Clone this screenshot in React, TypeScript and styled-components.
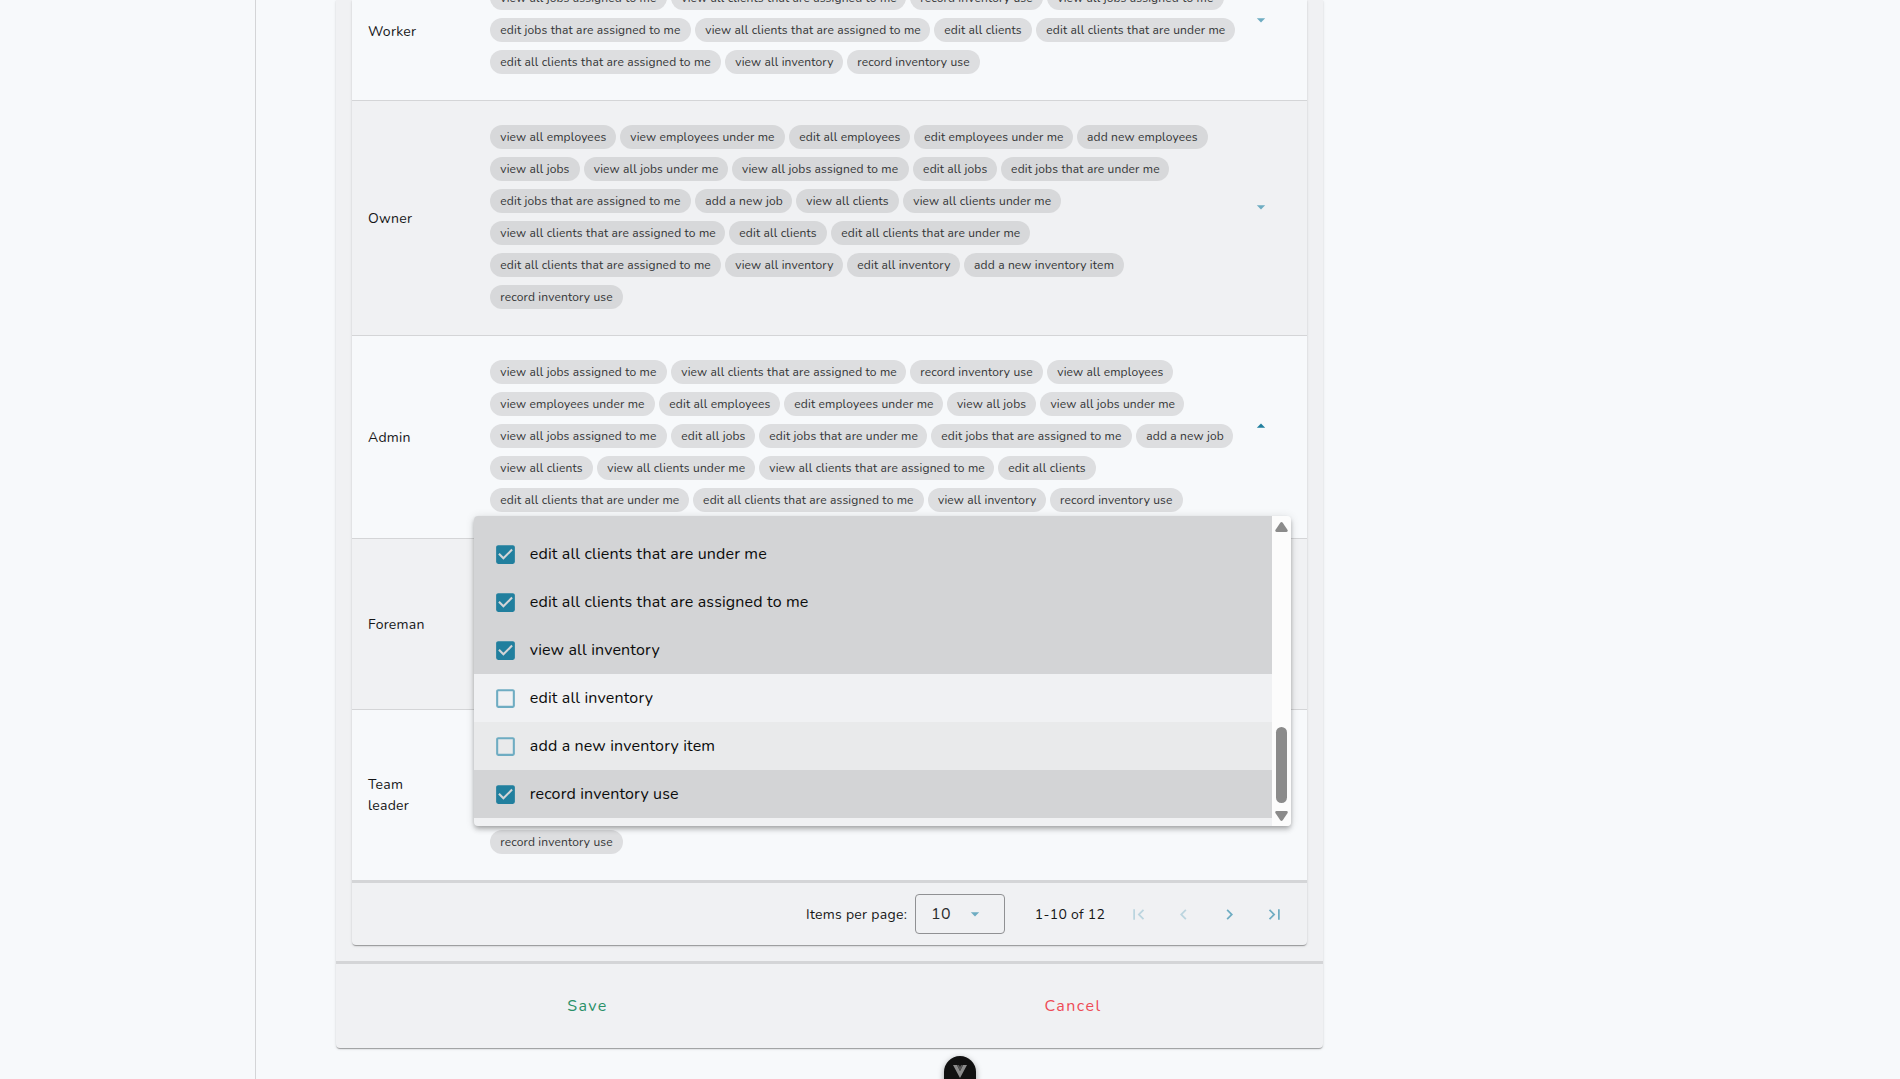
import React from "react";
import styled, { createGlobalStyle, css } from "styled-components";

const colors = {
  page: "#f7f9fb",
  surface: "#f0f1f3",
  line: "#d4d5d7",
  accent: "#6eacc2",
  primary: "#217f9e",
  text: "#151617",
};

const GlobalStyle = createGlobalStyle`
  * { box-sizing: border-box; }
  html, body { margin: 0; height: 1079px; overflow: hidden; background: ${colors.page}; }
  body { font-family: Nunito, Lato, "Noto Sans", sans-serif; color: ${colors.text}; }
  button { font: inherit; border: 0; background: none; padding: 0; }
`;

const Page = styled.div`
  display: flex;
  position: relative;
  height: 1079px;
  overflow: hidden;
`;
const Sidebar = styled.aside`
  width: 256px;
  border-right: 1px solid ${colors.line};
`;
const Main = styled.main`
  padding-left: 80px;
`;
const elevation = css`
  box-shadow: 0 2px 1px -1px rgba(0, 0, 0, 0.2), 0 1px 1px 0 rgba(0, 0, 0, 0.14),
    0 1px 3px 0 rgba(0, 0, 0, 0.12);
`;
const Card = styled.section`
  width: 987px;
  height: 1048px;
  display: flex;
  flex-direction: column;
  background: ${colors.surface};
  border-radius: 0 0 4px 4px;
  ${elevation}
`;
const TableCard = styled.div`
  margin: 0 16px 16px;
  height: 945px;
  flex: none;
  display: flex;
  flex-direction: column;
  justify-content: flex-end;
  border-radius: 0 0 4px 4px;
  ${elevation}
`;
const Row = styled.div<{ $striped?: boolean; $last?: boolean }>`
  flex: none;
  display: grid;
  grid-template-columns: 122px 751px 1fr;
  align-items: center;
  padding: 0 0 0 16px;
  background: ${(p) => (p.$striped ? colors.surface : colors.page)};
  border-bottom: ${(p) => (p.$last ? 3 : 1)}px solid ${colors.line};
`;
const RoleName = styled.div`
  width: 66px;
  font-size: 14px;
  line-height: 21px;
  letter-spacing: 0.25px;
`;
const Chips = styled.div<{ $lines: number }>`
  display: flex;
  flex-wrap: wrap;
  align-content: flex-start;
  gap: 8px 4px;
  padding-top: 24px;
  height: ${(p) => p.$lines * 32 + 42}px;
`;
const Chip = styled.span<{ $width: number; $striped?: boolean }>`
  width: ${(p) => p.$width}px;
  height: 24px;
  border-radius: 12px;
  padding-left: 10.3px;
  display: flex;
  align-items: center;
  white-space: nowrap;
  font-size: 12px;
  letter-spacing: 0.15px;
  color: #333435;
  background: ${(p) => (p.$striped ? "#d7d8da" : "#dddee0")};
`;
const Caret = styled.button<{ $open?: boolean }>`
  display: flex;
  width: 20px;
  height: 20px;
  margin: 0 0 23px 10px;
  color: ${(p) => (p.$open ? colors.primary : colors.accent)};
  transform: ${(p) => (p.$open ? "rotate(180deg)" : "none")};
`;

const Pager = styled.div`
  flex: none;
  height: 62px;
  display: flex;
  align-items: center;
  justify-content: flex-end;
  padding-right: 22.1px;
  font-size: 14px;
  letter-spacing: 0.28px;
`;
const PerPage = styled.span`
  width: 109px;
`;
const Select = styled.div`
  width: 90px;
  height: 40px;
  display: flex;
  align-items: center;
  justify-content: space-between;
  padding: 0 19px 0 15px;
  border: 1px solid #909193;
  border-radius: 4px;
  font-size: 16px;
  color: #2b2c2d;
`;
const SelectCaret = styled.span`
  display: flex;
  color: ${colors.accent};
`;
const Range = styled.span`
  width: 92.9px;
  margin-left: 29.8px;
`;
const PageButton = styled.button<{ $disabled?: boolean }>`
  display: flex;
  margin-left: 24.4px;
  color: ${colors.accent};
  opacity: ${(p) => (p.$disabled ? 0.4 : 1)};
  &:first-of-type { margin-left: 0; }
`;

const Actions = styled.footer`
  flex: 1;
  display: grid;
  grid-template-columns: 503px 1fr;
  border-top: 3px solid ${colors.line};
  padding-bottom: 1px;
`;
const Action = styled.button<{ $tone: string; $shift?: number }>`
  color: ${(p) => p.$tone};
  font-size: 16px;
  letter-spacing: 1.43px;
  padding-right: ${(p) => p.$shift ?? 0}px;
`;

const Menu = styled.div`
  position: absolute;
  left: 474px;
  top: 516px;
  width: 817px;
  height: 310px;
  display: flex;
  overflow: hidden;
  border-radius: 4px;
  background: ${colors.surface};
  box-shadow: 0 2px 4px -1px rgba(0, 0, 0, 0.2), 0 4px 5px 0 rgba(0, 0, 0, 0.14),
    0 1px 10px 0 rgba(0, 0, 0, 0.12);
`;
const Options = styled.div`
  flex: 1;
  display: flex;
  flex-direction: column;
  justify-content: flex-end;
  padding-bottom: 8px;
`;
const Option = styled.div<{ $checked?: boolean; $hover?: boolean }>`
  flex: none;
  height: 48px;
  display: flex;
  align-items: center;
  gap: 11.4px;
  padding-left: 19.4px;
  font-size: 16px;
  letter-spacing: 0.15px;
  color: #0b0c0c;
  background: ${(p) => (p.$checked ? "#d3d4d6" : p.$hover ? "#e9eaeb" : colors.surface)};
`;
const Scrollbar = styled.div`
  width: 19px;
  display: flex;
  flex-direction: column;
  align-items: center;
  background: #fcfcfc;
  padding: 6px 0 5px;
`;
const Thumb = styled.div`
  width: 11px;
  height: 76px;
  margin: auto 0 8px;
  border-radius: 6px;
  background: #8b8b8b;
`;
const Badge = styled.div`
  position: absolute;
  left: 944px;
  top: 1056px;
  width: 32px;
  height: 44px;
  border-radius: 16px;
  background: #111;
  box-shadow: 0 2px 6px rgba(0, 0, 0, 0.35);
  display: flex;
  justify-content: center;
  align-items: flex-start;
  padding-top: 9px;
`;

const chipWidths: Record<string, number> = {
  "view all jobs assigned to me": 177,
  "view all employees": 126,
  "view employees under me": 165,
  "edit all employees": 121,
  "edit employees under me": 158.7,
  "add new employees": 131,
  "view all jobs": 89.5,
  "view all jobs under me": 144.3,
  "edit all jobs": 84,
  "edit jobs that are under me": 168,
  "edit jobs that are assigned to me": 201,
  "add a new job": 97,
  "view all clients": 103,
  "view all clients under me": 158,
  "view all clients that are assigned to me": 235,
  "edit all clients": 98,
  "edit all clients that are under me": 198.8,
  "edit all clients that are assigned to me": 231,
  "view all inventory": 118,
  "edit all inventory": 112.8,
  "add a new inventory item": 160,
  "record inventory use": 133,
};

interface Role {
  name: string;
  lines: number;
  permissions: string[];
  open?: boolean;
}

const workerPermissions = [
  "view all jobs assigned to me",
  "view all clients that are assigned to me",
  "record inventory use",
  "view all jobs assigned to me",
  "edit jobs that are assigned to me",
  "view all clients that are assigned to me",
  "edit all clients",
  "edit all clients that are under me",
  "edit all clients that are assigned to me",
  "view all inventory",
  "record inventory use",
];

const leadPermissions = [
  "view all jobs assigned to me",
  "view all clients that are assigned to me",
  "record inventory use",
  "view all employees",
  "view employees under me",
  "view all jobs under me",
  "view all jobs assigned to me",
  "edit jobs that are under me",
  "edit jobs that are assigned to me",
  "view all clients under me",
  "edit all clients that are under me",
  "view all inventory",
  "record inventory use",
];

const roles: Role[] = [
  { name: "Worker", lines: 3, permissions: workerPermissions },
  {
    name: "Owner",
    lines: 6,
    permissions: [
      "view all employees",
      "view employees under me",
      "edit all employees",
      "edit employees under me",
      "add new employees",
      "view all jobs",
      "view all jobs under me",
      "view all jobs assigned to me",
      "edit all jobs",
      "edit jobs that are under me",
      "edit jobs that are assigned to me",
      "add a new job",
      "view all clients",
      "view all clients under me",
      "view all clients that are assigned to me",
      "edit all clients",
      "edit all clients that are under me",
      "edit all clients that are assigned to me",
      "view all inventory",
      "edit all inventory",
      "add a new inventory item",
      "record inventory use",
    ],
  },
  {
    name: "Admin",
    lines: 5,
    open: true,
    permissions: [
      "view all jobs assigned to me",
      "view all clients that are assigned to me",
      "record inventory use",
      "view all employees",
      "view employees under me",
      "edit all employees",
      "edit employees under me",
      "view all jobs",
      "view all jobs under me",
      "view all jobs assigned to me",
      "edit all jobs",
      "edit jobs that are under me",
      "edit jobs that are assigned to me",
      "add a new job",
      "view all clients",
      "view all clients under me",
      "view all clients that are assigned to me",
      "edit all clients",
      "edit all clients that are under me",
      "edit all clients that are assigned to me",
      "view all inventory",
      "record inventory use",
    ],
  },
  { name: "Foreman", lines: 4, permissions: leadPermissions },
  { name: "Team leader", lines: 4, permissions: leadPermissions },
];

const options = [
  { label: "edit all clients", checked: true },
  { label: "edit all clients that are under me", checked: true },
  { label: "edit all clients that are assigned to me", checked: true },
  { label: "view all inventory", checked: true },
  { label: "edit all inventory" },
  { label: "add a new inventory item", hover: true },
  { label: "record inventory use", checked: true },
];

const Icon = ({ path, size = 21 }: { path: string; size?: number }) => (
  <svg width={size} height={size} viewBox="0 0 24 24" fill="currentColor">
    <path d={path} />
  </svg>
);

const icons = {
  menuDown: "M7,10L12,15L17,10H7Z",
  first: "M18.41,16.59L13.82,12L18.41,7.41L17,6L11,12L17,18L18.41,16.59M6,6H8V18H6V6Z",
  prev: "M15.41,16.58L10.83,12L15.41,7.41L14,6L8,12L14,18L15.41,16.58Z",
  next: "M8.59,16.58L13.17,12L8.59,7.41L10,6L16,12L10,18L8.59,16.58Z",
  last: "M5.59,7.41L10.18,12L5.59,16.59L7,18L13,12L7,6L5.59,7.41M16,6H18V18H16V6Z",
};

const CheckBox = styled.svg<{ $checked?: boolean }>`
  flex: none;
  margin-top: 1px;
  fill: ${(p) => (p.$checked ? colors.primary : colors.accent)};
`;

const checkedPath =
  "M10,17L5,12L6.41,10.58L10,14.17L17.59,6.58L19,8M19,3H5C3.89,3 3,3.89 3,5V19A2,2 0 0,0 5,21H19A2,2 0 0,0 21,19V5C21,3.89 20.1,3 19,3Z";
const blankPath =
  "M19,3H5C3.89,3 3,3.89 3,5V19A2,2 0 0,0 5,21H19A2,2 0 0,0 21,19V5C21,3.89 20.1,3 19,3M19,5V19H5V5H19Z";

function RoleRow({ role, striped, last }: { role: Role; striped: boolean; last: boolean }) {
  return (
    <Row $striped={striped} $last={last}>
      <RoleName>{role.name}</RoleName>
      <Chips $lines={role.lines}>
        {role.permissions.map((label, i) => (
          <Chip key={i} $width={chipWidths[label]} $striped={striped}>
            {label}
          </Chip>
        ))}
      </Chips>
      <Caret $open={role.open} aria-label="Toggle permissions">
        <Icon path={icons.menuDown} size={20} />
      </Caret>
    </Row>
  );
}

export default function App() {
  return (
    <Page>
      <GlobalStyle />
      <Sidebar />
      <Main>
        <Card>
          <TableCard>
            {roles.map((role, i) => (
              <RoleRow key={role.name} role={role} striped={i % 2 === 1} last={i === roles.length - 1} />
            ))}
            <Pager>
              <PerPage>Items per page:</PerPage>
              <Select>
                10
                <SelectCaret>
                  <Icon path={icons.menuDown} size={20} />
                </SelectCaret>
              </Select>
              <Range>1-10 of 12</Range>
              <PageButton $disabled aria-label="First page"><Icon path={icons.first} /></PageButton>
              <PageButton $disabled aria-label="Previous page"><Icon path={icons.prev} /></PageButton>
              <PageButton aria-label="Next page"><Icon path={icons.next} /></PageButton>
              <PageButton aria-label="Last page"><Icon path={icons.last} /></PageButton>
            </Pager>
          </TableCard>
          <Actions>
            <Action $tone="#2a9068">Save</Action>
            <Action $tone="#ee4b56" $shift={16}>Cancel</Action>
          </Actions>
        </Card>
      </Main>
      <Menu>
        <Options>
          {options.map((o) => (
            <Option key={o.label} $checked={o.checked} $hover={o.hover}>
              <CheckBox $checked={o.checked} width="25" height="25" viewBox="0 0 24 24">
                <path d={o.checked ? checkedPath : blankPath} />
              </CheckBox>
              {o.label}
            </Option>
          ))}
        </Options>
        <Scrollbar>
          <svg width="13" height="10" viewBox="0 0 13 10" fill="#8b8b8b">
            <path d="M5.3 .8Q6.5-.6 7.7 .8L12.6 8Q13.2 9.8 11.5 10H1.5Q-.2 9.8 .4 8Z" />
          </svg>
          <Thumb />
          <svg width="13" height="10" viewBox="0 0 13 10" fill="#8b8b8b">
            <path d="M5.3 9.2Q6.5 10.6 7.7 9.2L12.6 2Q13.2 .2 11.5 0H1.5Q-.2 .2 .4 2Z" />
          </svg>
        </Scrollbar>
      </Menu>
      <Badge>
        <svg width="14" height="13" viewBox="0 0 14 13">
          <path d="M0 0H4L7 6L10 0H14L7 13Z" fill="#8b8b8b" />
          <path d="M4 0H6L7 2L8 0H10L7 6Z" fill="#555" />
        </svg>
      </Badge>
    </Page>
  );
}
